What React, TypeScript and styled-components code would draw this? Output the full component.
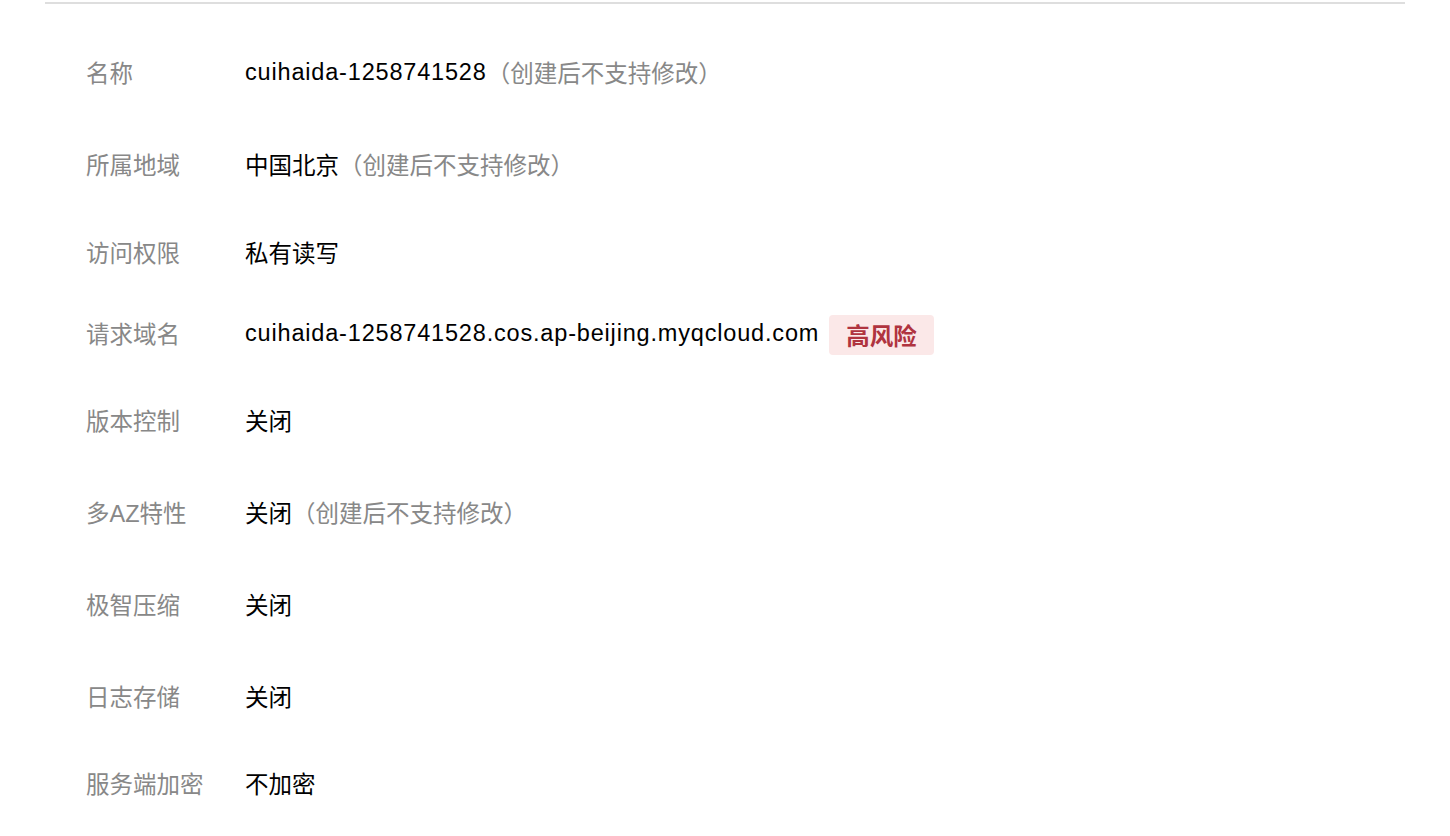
import React from "react";
import styled, { createGlobalStyle } from "styled-components";

const Global = createGlobalStyle`
  html, body { margin: 0; padding: 0; background: #fff; }
  body {
    font-family: "Liberation Sans", "Noto Sans CJK SC", sans-serif;
    -webkit-font-smoothing: antialiased;
  }
`;

const Page = styled.div`
  width: 1450px;
  height: 836px;
  overflow: hidden;
  box-sizing: border-box;
  padding: 2px 45px 0 45px;
`;

const Divider = styled.div`
  height: 2px;
  background: #dedede;
  width: 1360px;
`;

const List = styled.div`
  display: flex;
  flex-direction: column;
  padding: 22px 0 0 41px;
`;

const Row = styled.div<{ $h: number }>`
  display: flex;
  align-items: center;
  height: ${(p) => p.$h}px;
  font-size: 23.5px;
`;

const Label = styled.div`
  width: 159px;
  flex: none;
  color: #888;
`;

const Value = styled.div`
  display: flex;
  align-items: center;
  color: #000;
`;

const Main = styled.span<{ $latin?: boolean }>`
  letter-spacing: ${(p) => (p.$latin ? "0.82px" : "0")};
`;

const Hint = styled.span`
  color: #888;
`;

const Badge = styled.span`
  display: inline-flex;
  align-items: center;
  justify-content: center;
  margin: 4px 0 0 10px;
  height: 40px;
  padding: 0 17px 0 17px;
  background: #fbe8e8;
  color: #b0343f;
  font-weight: bold;
  border-radius: 4px;
  font-size: 23.5px;
`;

type Item = { label: string; value: string; latin?: boolean; hint?: string; badge?: string; h: number };

const items: Item[] = [
  { label: "名称", value: "cuihaida-1258741528", latin: true, hint: "（创建后不支持修改）", h: 92 },
  { label: "所属地域", value: "中国北京", hint: "（创建后不支持修改）", h: 92 },
  { label: "访问权限", value: "私有读写", h: 84 },
  { label: "请求域名", value: "cuihaida-1258741528.cos.ap-beijing.myqcloud.com", latin: true, badge: "高风险", h: 78 },
  { label: "版本控制", value: "关闭", h: 96 },
  { label: "多AZ特性", value: "关闭", hint: "（创建后不支持修改）", h: 88 },
  { label: "极智压缩", value: "关闭", h: 96 },
  { label: "日志存储", value: "关闭", h: 88 },
  { label: "服务端加密", value: "不加密", h: 86 },
];

export default function App() {
  return (
    <Page>
      <Global />
      <Divider />
      <List>
        {items.map((it) => (
          <Row key={it.label} $h={it.h}>
            <Label>{it.label}</Label>
            <Value>
              <Main $latin={it.latin}>{it.value}</Main>
              {it.hint && <Hint>{it.hint}</Hint>}
              {it.badge && <Badge>{it.badge}</Badge>}
            </Value>
          </Row>
        ))}
      </List>
    </Page>
  );
}
